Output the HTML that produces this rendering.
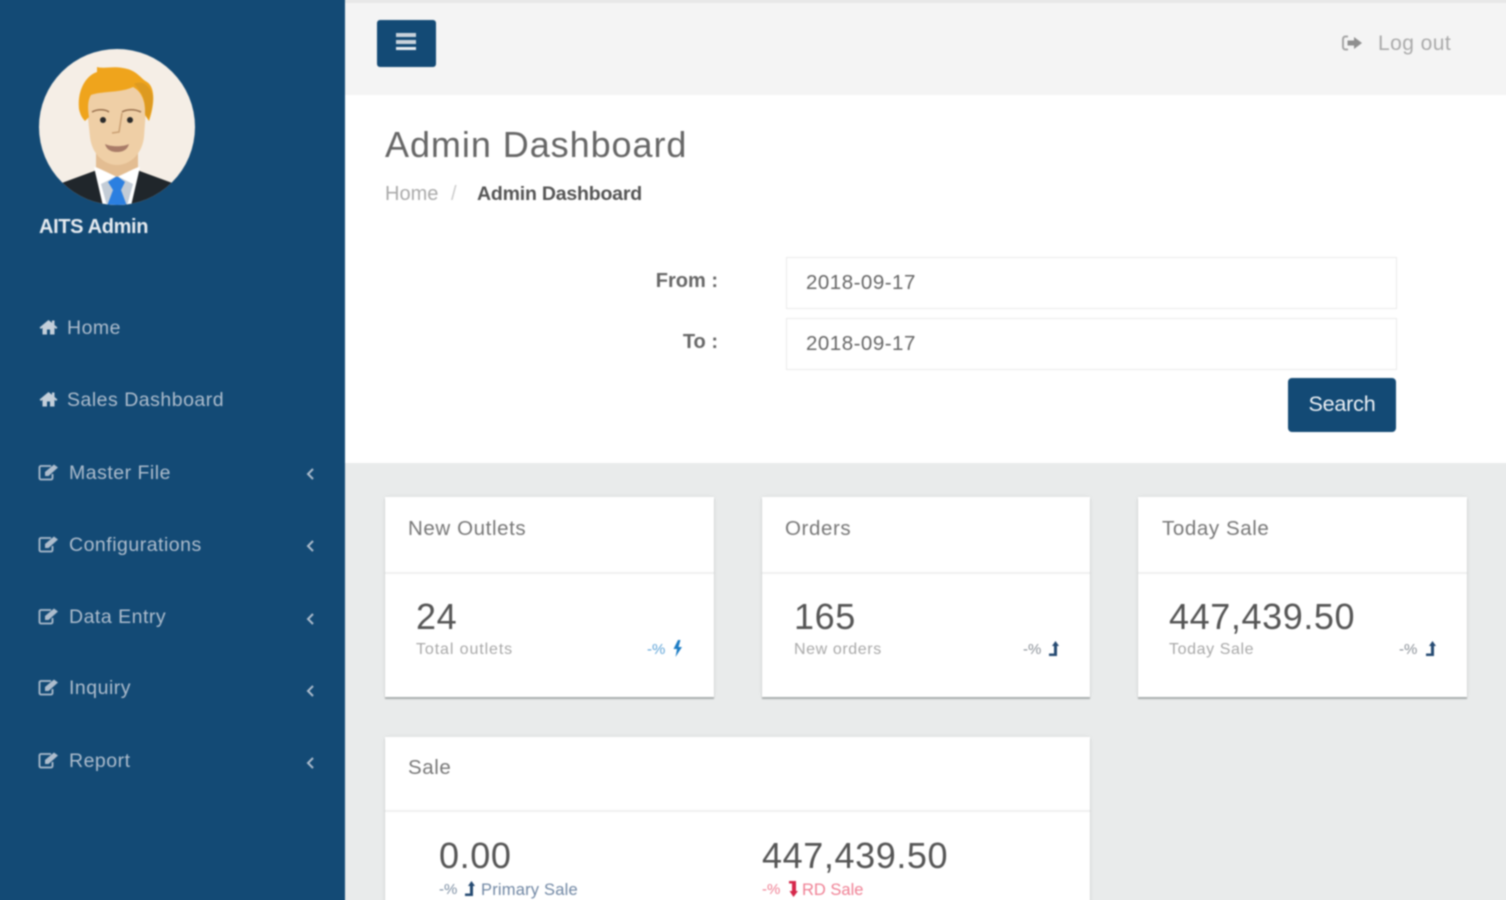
<!DOCTYPE html>
<html>
<head>
<meta charset="utf-8">
<style>
html,body{margin:0;padding:0;width:1506px;height:900px;overflow:hidden;background:#e9ebeb}
body{font-family:"Liberation Sans",sans-serif;position:relative}
#root{position:absolute;left:0;top:0;width:1506px;height:900px;filter:blur(.7px)}
.a{position:absolute;white-space:nowrap}
.side{position:absolute;left:-20px;top:-20px;width:365px;height:950px;background:#134a75}
.nav{color:#aebdcd;font-size:19.5px;font-weight:400;line-height:24px;letter-spacing:.5px}
.card{position:absolute;background:#fff;box-shadow:0 2px 1px #a9adad,0 0 4px rgba(0,0,0,.08)}
.card .hr{position:absolute;left:0;right:0;height:2px;background:#eff0f0}
.ct{color:#777;font-size:20.5px;line-height:24px;letter-spacing:.6px}
.num{color:#555;font-size:36px;line-height:40px;letter-spacing:.6px}
.sub{color:#a8a8a8;font-size:16px;line-height:20px;letter-spacing:.7px}
.inp{position:absolute;left:786px;width:611px;height:52px;background:#fff;border:1px solid #eaeaea;box-sizing:border-box;color:#666;font-size:20.5px;line-height:50px;padding-left:19px;letter-spacing:.5px}
.lab{color:#666;font-size:20px;font-weight:700;text-align:right;width:120px;line-height:24px}
</style>
</head>
<body>
<div id="root">
<!-- main backgrounds -->
<div class="a" style="left:345px;top:-20px;width:1190px;height:115px;background:#f4f4f4"></div>
<div class="a" style="left:345px;top:-20px;width:1190px;height:23px;background:#e8e8e8"></div>
<div class="a" style="left:345px;top:95px;width:1190px;height:368px;background:#fff"></div>
<div class="a" style="left:345px;top:463px;width:1190px;height:470px;background:#e9ebeb"></div>

<!-- sidebar -->
<div class="side"></div>
<svg class="a" style="left:39px;top:49px" width="157" height="157" viewBox="0 0 157 157">
<defs><clipPath id="c"><circle cx="78" cy="78" r="78"/></clipPath></defs>
<circle cx="78" cy="78" r="78" fill="#f5eee6"/>
<g clip-path="url(#c)">
<path d="M20 135 L58 121 L98 121 L136 135 L126 157 L30 157Z" fill="#20262b"/>
<path d="M55 118 L64 157 L92 157 L101 118 L78 126Z" fill="#fff"/>
<path d="M62 135 L68 157 L88 157 L94 135 L78 127Z" fill="#c3ccd6"/>
<path d="M69 133 L78 127 L86 133 L82 141 L88 157 L68 157 L74 141Z" fill="#2b7fe0"/>
<path d="M57 100 L57 118 L78 128 L99 118 L99 100Z" fill="#e3bd92"/>
<path d="M48 60 C48 40 60 32 78 32 C96 32 108 40 107 60 L105 88 C103 106 90 116 78 116 C66 116 53 106 51 88Z" fill="#efcfa6"/>
<path d="M40 60 C38 40 48 26 58 23 L58 18 C66 20 72 17 84 19 C98 21 102 30 108 33 C116 38 116 54 110 72 L106 66 C107 52 102 42 94 38 C82 44 62 42 52 46 C48 52 49 62 50 68 L46 72 C42 68 41 64 40 60Z" fill="#efa41c"/>
<path d="M95 35 C104 30 112 38 114 48 C114 56 112 64 109 70 L106 64 C107 50 102 42 95 35Z" fill="#dd9a20"/>
<circle cx="64" cy="71" r="3" fill="#2a2a2a"/><circle cx="91" cy="71" r="3" fill="#2a2a2a"/>
<path d="M53 63 C58 60 66 60 70 63 M83 63 C88 60 96 60 102 63" stroke="#9a7250" stroke-width="1.6" fill="none"/>
<path d="M83 64 L80 83 L73 84" stroke="#c99f73" stroke-width="1.5" fill="none"/>
<path d="M66 95 C72 98 84 98 90 95 C88 102 82 103 78 103 C74 103 68 102 66 95Z" fill="#a97c68"/>
</g>
</svg>
<div class="a" style="left:39px;top:215px;color:#e6ebf0;font-size:20px;font-weight:700;line-height:24px;letter-spacing:-.35px">AITS Admin</div>

<!-- nav -->
<svg class="a" style="left:39px;top:319px" width="19" height="16" viewBox="0 0 19 16"><path d="M9.5 1 L13 3.9 V1.5 H15.5 V6 L18.5 8.5 L17 10 L15.5 8.7 V15.5 H11 V10.5 H8 V15.5 H3.5 V8.7 L2 10 L.5 8.5Z" fill="#c3cfda"/></svg>
<div class="a nav" style="left:67px;top:316px">Home</div>
<svg class="a" style="left:39px;top:391px" width="19" height="16" viewBox="0 0 19 16"><path d="M9.5 1 L13 3.9 V1.5 H15.5 V6 L18.5 8.5 L17 10 L15.5 8.7 V15.5 H11 V10.5 H8 V15.5 H3.5 V8.7 L2 10 L.5 8.5Z" fill="#c3cfda"/></svg>
<div class="a nav" style="left:67px;top:388px">Sales Dashboard</div>

<svg class="a" style="left:38px;top:463px" width="22" height="18" viewBox="0 0 22 18"><path d="M13 3 H3 A1.5 1.5 0 0 0 1.5 4.5 V15 A1.5 1.5 0 0 0 3 16.5 H13 A1.5 1.5 0 0 0 14.5 15 V11" fill="none" stroke="#aebdcd" stroke-width="1.8"/><path d="M7 9 L16 1.5 L20 4.5 L10.5 13 H7Z" fill="#aebdcd"/></svg>
<div class="a nav" style="left:69px;top:461px">Master File</div>
<svg class="a" style="left:305px;top:467px" width="10" height="14" viewBox="0 0 10 14"><path d="M8 2 L3 7 L8 12" fill="none" stroke="#aebdcd" stroke-width="2"/></svg>

<svg class="a" style="left:38px;top:535px" width="22" height="18" viewBox="0 0 22 18"><path d="M13 3 H3 A1.5 1.5 0 0 0 1.5 4.5 V15 A1.5 1.5 0 0 0 3 16.5 H13 A1.5 1.5 0 0 0 14.5 15 V11" fill="none" stroke="#aebdcd" stroke-width="1.8"/><path d="M7 9 L16 1.5 L20 4.5 L10.5 13 H7Z" fill="#aebdcd"/></svg>
<div class="a nav" style="left:69px;top:533px">Configurations</div>
<svg class="a" style="left:305px;top:539px" width="10" height="14" viewBox="0 0 10 14"><path d="M8 2 L3 7 L8 12" fill="none" stroke="#aebdcd" stroke-width="2"/></svg>

<svg class="a" style="left:38px;top:607px" width="22" height="18" viewBox="0 0 22 18"><path d="M13 3 H3 A1.5 1.5 0 0 0 1.5 4.5 V15 A1.5 1.5 0 0 0 3 16.5 H13 A1.5 1.5 0 0 0 14.5 15 V11" fill="none" stroke="#aebdcd" stroke-width="1.8"/><path d="M7 9 L16 1.5 L20 4.5 L10.5 13 H7Z" fill="#aebdcd"/></svg>
<div class="a nav" style="left:69px;top:605px">Data Entry</div>
<svg class="a" style="left:305px;top:612px" width="10" height="14" viewBox="0 0 10 14"><path d="M8 2 L3 7 L8 12" fill="none" stroke="#aebdcd" stroke-width="2"/></svg>

<svg class="a" style="left:38px;top:678px" width="22" height="18" viewBox="0 0 22 18"><path d="M13 3 H3 A1.5 1.5 0 0 0 1.5 4.5 V15 A1.5 1.5 0 0 0 3 16.5 H13 A1.5 1.5 0 0 0 14.5 15 V11" fill="none" stroke="#aebdcd" stroke-width="1.8"/><path d="M7 9 L16 1.5 L20 4.5 L10.5 13 H7Z" fill="#aebdcd"/></svg>
<div class="a nav" style="left:69px;top:676px">Inquiry</div>
<svg class="a" style="left:305px;top:684px" width="10" height="14" viewBox="0 0 10 14"><path d="M8 2 L3 7 L8 12" fill="none" stroke="#aebdcd" stroke-width="2"/></svg>

<svg class="a" style="left:38px;top:751px" width="22" height="18" viewBox="0 0 22 18"><path d="M13 3 H3 A1.5 1.5 0 0 0 1.5 4.5 V15 A1.5 1.5 0 0 0 3 16.5 H13 A1.5 1.5 0 0 0 14.5 15 V11" fill="none" stroke="#aebdcd" stroke-width="1.8"/><path d="M7 9 L16 1.5 L20 4.5 L10.5 13 H7Z" fill="#aebdcd"/></svg>
<div class="a nav" style="left:69px;top:749px">Report</div>
<svg class="a" style="left:305px;top:756px" width="10" height="14" viewBox="0 0 10 14"><path d="M8 2 L3 7 L8 12" fill="none" stroke="#aebdcd" stroke-width="2"/></svg>

<!-- top bar -->
<div class="a" style="left:377px;top:20px;width:59px;height:47px;background:#134a75;border-radius:3px"></div>
<div class="a" style="left:396px;top:33px;width:20px;height:4px;background:#c9d3dc"></div>
<div class="a" style="left:396px;top:40px;width:20px;height:4px;background:#c9d3dc"></div>
<div class="a" style="left:396px;top:47px;width:20px;height:3px;background:#e8edf2"></div>
<svg class="a" style="left:1341px;top:34px" width="22" height="18" viewBox="0 0 22 18"><path d="M7 2.5 H4.5 A2.5 2.5 0 0 0 2 5 V13 A2.5 2.5 0 0 0 4.5 15.5 H7" fill="none" stroke="#a5a5a5" stroke-width="2"/><path d="M13 3 L21 9 L13 15 V11.5 H6.5 V6.5 H13Z" fill="#8f8f8f"/></svg>
<div class="a" style="left:1378px;top:31px;color:#aaa;font-size:21px;line-height:26px;letter-spacing:.45px">Log out</div>

<!-- heading -->
<div class="a" style="left:385px;top:123px;color:#666;font-size:36px;line-height:44px;letter-spacing:.95px">Admin Dashboard</div>
<div class="a" style="left:385px;top:182px;color:#aaa;font-size:20px;line-height:24px">Home</div>
<div class="a" style="left:451px;top:182px;color:#ccc;font-size:20px;line-height:24px">/</div>
<div class="a" style="left:477px;top:182px;color:#555;font-size:19.5px;font-weight:700;line-height:24px;letter-spacing:-.2px">Admin Dashboard</div>

<!-- form -->
<div class="a lab" style="left:598px;top:269px">From :</div>
<div class="a lab" style="left:598px;top:330px">To :</div>
<div class="inp" style="top:257px">2018-09-17</div>
<div class="inp" style="top:318px">2018-09-17</div>
<div class="a" style="left:1288px;top:378px;width:108px;height:54px;background:#134a75;border-radius:4px;color:#eef2f6;font-size:21.5px;line-height:52px;text-align:center;letter-spacing:-.2px">Search</div>

<!-- cards -->
<div class="card" style="left:385px;top:497px;width:329px;height:200px"><div class="hr" style="top:75px"></div></div>
<div class="card" style="left:762px;top:497px;width:328px;height:200px"><div class="hr" style="top:75px"></div></div>
<div class="card" style="left:1138px;top:497px;width:329px;height:200px"><div class="hr" style="top:75px"></div></div>
<div class="card" style="left:385px;top:737px;width:705px;height:190px"><div class="hr" style="top:73px"></div></div>

<div class="a ct" style="left:408px;top:517px">New Outlets</div>
<div class="a ct" style="left:785px;top:517px">Orders</div>
<div class="a ct" style="left:1162px;top:517px">Today Sale</div>
<div class="a ct" style="left:408px;top:756px">Sale</div>

<div class="a num" style="left:416px;top:597px">24</div>
<div class="a num" style="left:794px;top:597px">165</div>
<div class="a num" style="left:1169px;top:597px">447,439.50</div>
<div class="a num" style="left:439px;top:836px">0.00</div>
<div class="a num" style="left:762px;top:836px">447,439.50</div>

<div class="a sub" style="left:416px;top:640px;letter-spacing:.9px">Total outlets</div>
<div class="a sub" style="left:794px;top:640px;letter-spacing:.6px">New orders</div>
<div class="a sub" style="left:1169px;top:640px;letter-spacing:.6px">Today Sale</div>

<div class="a" style="left:647px;top:640px;color:#5fa4d8;font-size:15px;line-height:20px">-%</div>
<svg class="a" style="left:672px;top:640px" width="11" height="18" viewBox="0 0 11 18"><path d="M6 0 L1.5 9 H5 L3.5 17 L10 7 H6.5 L8.5 0Z" fill="#1c7cc4"/></svg>
<div class="a" style="left:1023px;top:640px;color:#8b9198;font-size:15px;line-height:20px">-%</div>
<svg class="a" style="left:1048px;top:640px" width="12" height="18" viewBox="0 0 12 18"><path d="M7.5 1 L11 6 H9 V16 H1 V13.5 H6 V6 H4Z" fill="#254a72"/></svg>
<div class="a" style="left:1399px;top:640px;color:#8b9198;font-size:15px;line-height:20px">-%</div>
<svg class="a" style="left:1425px;top:640px" width="12" height="18" viewBox="0 0 12 18"><path d="M7.5 1 L11 6 H9 V16 H1 V13.5 H6 V6 H4Z" fill="#254a72"/></svg>

<div class="a" style="left:439px;top:880px;color:#7d8fa3;font-size:15px;line-height:20px">-%</div>
<svg class="a" style="left:464px;top:881px" width="12" height="16" viewBox="0 0 12 16"><path d="M7.5 0 L11 5 H9 V15 H1 V12.5 H6 V5 H4Z" fill="#254a72"/></svg>
<div class="a" style="left:481px;top:880px;color:#6f86a3;font-size:16.5px;line-height:20px;letter-spacing:.2px">Primary Sale</div>
<div class="a" style="left:762px;top:880px;color:#ef7f93;font-size:15px;line-height:20px">-%</div>
<svg class="a" style="left:786px;top:881px" width="12" height="16" viewBox="0 0 12 16"><path d="M3 0 H10 V10 H12 L7.5 16 L3.5 10 H6 V2.5 H3Z" fill="#d5274a"/></svg>
<div class="a" style="left:802px;top:880px;color:#ef7f93;font-size:16.5px;line-height:20px">RD Sale</div>
</div>
</body>
</html>
